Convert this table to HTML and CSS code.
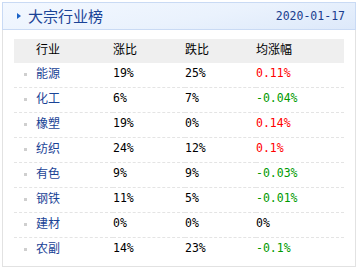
FILE: index.html
```html
<!DOCTYPE html>
<html>
<head>
<meta charset="utf-8">
<link rel="stylesheet" href="styles.css">
</head>
<body>
<div class="box">
  <div class="head">
    <div class="title"><span class="tri"></span>大宗行业榜</div>
    <div class="date">2020-01-17</div>
  </div>
  <table class="tbl">
    <thead>
      <tr><th class="c1">行业</th><th class="c2">涨比</th><th class="c3">跌比</th><th class="c4">均涨幅</th></tr>
    </thead>
    <tbody>
      <tr><td class="c1"><span class="dot"></span>能源</td><td class="num">19%</td><td class="num">25%</td><td class="num up">0.11%</td></tr>
      <tr><td class="c1"><span class="dot"></span>化工</td><td class="num">6%</td><td class="num">7%</td><td class="num down">-0.04%</td></tr>
      <tr><td class="c1"><span class="dot"></span>橡塑</td><td class="num">19%</td><td class="num">0%</td><td class="num up">0.14%</td></tr>
      <tr><td class="c1"><span class="dot"></span>纺织</td><td class="num">24%</td><td class="num">12%</td><td class="num up">0.1%</td></tr>
      <tr><td class="c1"><span class="dot"></span>有色</td><td class="num">9%</td><td class="num">9%</td><td class="num down">-0.03%</td></tr>
      <tr><td class="c1"><span class="dot"></span>钢铁</td><td class="num">11%</td><td class="num">5%</td><td class="num down">-0.01%</td></tr>
      <tr><td class="c1"><span class="dot"></span>建材</td><td class="num">0%</td><td class="num">0%</td><td class="num">0%</td></tr>
      <tr class="last"><td class="c1"><span class="dot"></span>农副</td><td class="num">14%</td><td class="num">23%</td><td class="num down">-0.1%</td></tr>
    </tbody>
  </table>
</div>
</body>
</html>
```

FILE: styles.css
```css
html, body { margin: 0; padding: 0; background: #fff; }
body { font-family: "Noto Sans CJK SC", "DejaVu Sans", sans-serif; font-size: 12px; color: #000; }
.box {
  margin: 2px 0 0 2px;
  width: 354px;
  height: 265px;
  box-sizing: border-box;
  border: 1px solid #e2e2e2;
  border-top: none;
}
.head {
  margin: 0 -1px;
  height: 28px;
  box-sizing: border-box;
  border: 1px solid #c9daf4;
  background: linear-gradient(170deg, #f3f8ff 0%, #eaf2fd 55%, #dde9fa 100%);
  display: flex;
  align-items: center;
  justify-content: space-between;
  padding: 0 10px 0 14px;
}
.title {
  display: flex;
  align-items: center;
  font-size: 15px;
  color: #1a4396;
  line-height: 18px;
  margin-top: -1px;
}
.tri {
  width: 0; height: 0;
  border-top: 3.5px solid transparent;
  border-bottom: 3.5px solid transparent;
  border-left: 4px solid #1b63c6;
  margin-right: 7px;
}
.date {
  font-family: "DejaVu Sans Mono", monospace;
  font-size: 11.5px;
  color: #1a3d8f;
  margin-top: -1px;
}
.tbl {
  margin: 9px 0 0 11px;
  width: 330px;
  border-collapse: collapse;
  table-layout: fixed;
}
.tbl th {
  background: #efefef;
  font-weight: normal;
  text-align: left;
  padding: 2px 0 6px 0;
  line-height: 16px;
  height: 16px;
}
.tbl td {
  padding: 2px 0 6px 0;
  line-height: 16px;
  height: 16px;
  border-bottom: 1px dashed #e4e4e4;
}
.tbl tr.last td { border-bottom: none; }
.c1 { width: 77px; padding-left: 22px !important; position: relative; }
.c2 { width: 72px; }
.c3 { width: 71px; }
.tbl td.c1 { color: #1a4396; }
.dot {
  position: absolute;
  left: 10px;
  top: 10px;
  width: 3px; height: 3px;
  background: #cfcfcf;
}
.num { font-family: "DejaVu Sans Mono", monospace; font-size: 11.5px; }
.up { color: #ff0000; }
.down { color: #009a00; }
```
